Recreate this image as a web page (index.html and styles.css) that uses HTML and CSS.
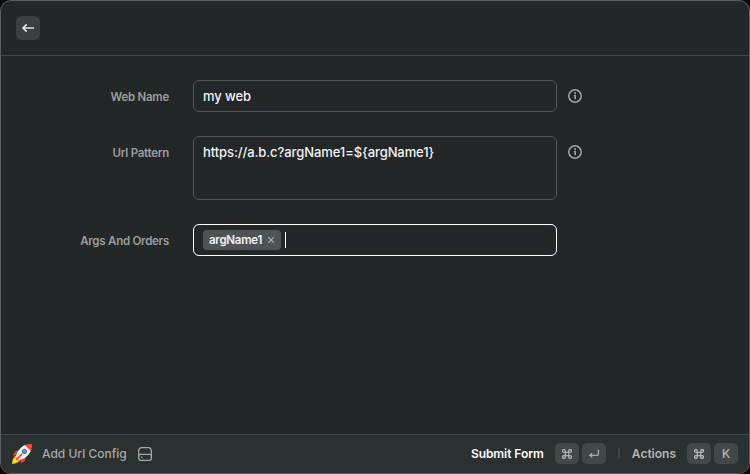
FILE: index.html
```html
<!DOCTYPE html>
<html lang="en">
<head>
<meta charset="utf-8">
<title>Add Url Config</title>
<link rel="stylesheet" href="styles.css">
</head>
<body>
<div class="window">
  <header class="header">
    <button class="back" aria-label="Back">
      <svg width="24" height="24" viewBox="0 0 24 24"><path d="M17.3 12H7M10.2 8.8 6.9 12l3.3 3.2" fill="none" stroke="#e2e4e4" stroke-width="1.7" stroke-linecap="round" stroke-linejoin="round"/></svg>
    </button>
  </header>
  <main class="form">
    <div class="row">
      <label class="label">Web Name</label>
      <div class="field"><span class="value">my web</span></div>
      <svg class="info" width="14" height="14" viewBox="0 0 14 14"><circle cx="7" cy="7" r="6.2" fill="none" stroke="#a4a6a6" stroke-width="1.5"/><path d="M6 6.5H7.2V10.3" fill="none" stroke="#a4a6a6" stroke-width="1.5"/><circle cx="7" cy="4.1" r="1" fill="#a4a6a6"/></svg>
    </div>
    <div class="row">
      <label class="label">Url Pattern</label>
      <div class="field area"><span class="value url">https://a.b.c?argName1=${argName1}</span></div>
      <svg class="info" width="14" height="14" viewBox="0 0 14 14"><circle cx="7" cy="7" r="6.2" fill="none" stroke="#a4a6a6" stroke-width="1.5"/><path d="M6 6.5H7.2V10.3" fill="none" stroke="#a4a6a6" stroke-width="1.5"/><circle cx="7" cy="4.1" r="1" fill="#a4a6a6"/></svg>
    </div>
    <div class="row">
      <label class="label">Args And Orders</label>
      <div class="field focused">
        <span class="tag"><span>argName1</span><svg width="8" height="8" viewBox="0 0 8 8"><path d="M1.2 1.2 6.8 6.8M6.8 1.2 1.2 6.8" stroke="#b4b5b5" stroke-width="1.1"/></svg></span>
        <span class="caret"></span>
      </div>
    </div>
  </main>
  <footer class="footer">
    <svg class="rocket" width="22" height="22" viewBox="0 0 22 22">
      <path d="M1 21C1 16.5 2.5 13.5 5.5 12.5L9.5 16.5C8.5 19 5.5 20.5 1 21Z" fill="#f5b51d"/>
      <path d="M1.6 20.4C2.2 17.6 3.6 15.4 5.8 14.6L7.4 16.2C6.4 18.4 4.4 19.8 1.6 20.4Z" fill="#ffe34d"/>
      <path d="M8.5 7.2 4.2 8.2 1.8 12.6 6 12.2ZM15 13.4 14.2 17.8 9.6 20.6 9.8 16Z" fill="#e8452f"/>
      <path d="M5 13.5C6.3 7.8 10.4 3 15.2 1.8L20.3 6.8C18.8 11.4 14.2 15.8 8.5 17Z" fill="#eaf0f7"/>
      <path d="M14 2.2C16.4 1 18.8.9 21 1 21.2 3.4 20.9 5.8 19.8 8.1Z" fill="#ed4b36"/>
      <circle cx="13.4" cy="8.5" r="2.5" fill="#51616d"/><circle cx="13.4" cy="8.5" r="1.6" fill="#42a9dc"/>
      <path d="M10.5 11.5 5.7 16.4" stroke="#e8452f" stroke-width="1.7" stroke-linecap="round"/>
    </svg>
    <span class="command">Add Url Config</span>
    <svg class="drive" width="14" height="14" viewBox="0 0 14 14"><path d="M.7 9.5V4C.7 1.6 1.6.7 3.8.7h6.4c2.2 0 3.1.9 3.1 3.3v5.5" fill="none" stroke="#a6a9a9" stroke-width="1.3"/><rect x=".7" y="7.3" width="12.6" height="6" rx="2" fill="none" stroke="#a6a9a9" stroke-width="1.3"/><circle cx="3.8" cy="10.4" r=".8" fill="#a6a9a9"/></svg>
    <div class="actions">
      <span class="submit">Submit Form</span>
      <span class="key first"><svg width="10" height="10" viewBox="0 0 10 10"><path d="M3.3 3.3V1.9A1.4 1.4 0 1 0 1.9 3.3H8.1A1.4 1.4 0 1 0 6.7 1.9V8.1A1.4 1.4 0 1 0 8.1 6.7H1.9A1.4 1.4 0 1 0 3.3 8.1Z" fill="none" stroke="#a9adad" stroke-width="1.3"/></svg></span>
      <span class="key"><svg width="12" height="10" viewBox="0 0 12 10"><path d="M10.4.8V4.8C10.4 5.8 9.9 6.3 8.9 6.3H2" fill="none" stroke="#a9adad" stroke-width="1.3"/><path d="M4.2 3.5V9.1L.8 6.3Z" fill="#a9adad"/></svg></span>
      <span class="divider"></span>
      <span class="more">Actions</span>
      <span class="key first"><svg width="10" height="10" viewBox="0 0 10 10"><path d="M3.3 3.3V1.9A1.4 1.4 0 1 0 1.9 3.3H8.1A1.4 1.4 0 1 0 6.7 1.9V8.1A1.4 1.4 0 1 0 8.1 6.7H1.9A1.4 1.4 0 1 0 3.3 8.1Z" fill="none" stroke="#b4b7b7" stroke-width="1.3"/></svg></span>
      <span class="key">K</span>
    </div>
  </footer>
</div>
</body>
</html>
```
FILE: styles.css
```css
* { box-sizing: border-box; }
body {
  margin: 0;
  background: #090909;
  font-family: Inter, "Liberation Sans", sans-serif;
  font-size: 13px;
  font-weight: 500;
  color: #f2f3f3;
}
.window {
  width: 750px;
  height: 474px;
  display: flex;
  flex-direction: column;
  border: 1px solid #5b5f5f;
  border-radius: 11px;
  overflow: hidden;
  background: #232727;
}
.header {
  height: 55px;
  flex: none;
  padding: 15px;
  border-bottom: 1px solid #424646;
}
.back {
  display: block;
  width: 24px;
  height: 24px;
  padding: 0;
  border: 0;
  border-radius: 6px;
  background: #3c3f3f;
}
.back svg { display: block; }
.form {
  flex: 1;
  display: flex;
  flex-direction: column;
  gap: 24px;
  padding-top: 24px;
}
.row { display: flex; align-items: flex-start; }
.label {
  width: 168px;
  height: 32px;
  margin-right: 24px;
  padding-top: 1px;
  line-height: 32px;
  font-size: 11.5px;
  font-weight: 600;
  letter-spacing: -.25px;
  text-align: right;
  color: #9b9d9d;
}
.field {
  width: 364px;
  height: 32px;
  display: flex;
  align-items: center;
  padding: 0 9px;
  border: 1px solid #515555;
  border-radius: 6px;
}
.area { height: 64px; align-items: flex-start; padding-top: 7px; }
.focused { border-color: #fff; }
.value { line-height: 16px; letter-spacing: -.09px; }
.info { margin: 9px 0 0 11px; }
.tag {
  height: 20px;
  width: 78px;
  display: flex;
  align-items: center;
  justify-content: space-between;
  padding: 0 6px;
  border-radius: 4px;
  background: #505353;
  font-size: 11.5px;
  font-weight: 600;
  letter-spacing: -.25px;
}
.caret { width: 1px; height: 16px; margin-left: 4px; background: #fff; }
.footer {
  height: 39px;
  flex: none;
  display: flex;
  align-items: center;
  padding: 0 11px 0 10px;
  border-top: 1px solid #424646;
  background: #2b3030;
  font-size: 12px;
}
.command { margin-left: 9px; padding-bottom: 2px; color: #a6a9a9; }
.drive { margin-left: 11px; }
.actions { margin-left: auto; display: flex; align-items: center; padding-bottom: 1px; }
.submit { font-weight: 600; letter-spacing: -.05px; color: #fff; }
.more { font-weight: 600; color: #b4b7b7; }
.key {
  width: 24px;
  height: 21px;
  margin-left: 3px;
  display: flex;
  align-items: center;
  justify-content: center;
  border-radius: 5px;
  background: #434747;
  color: #b4b7b7;
}
.first { margin-left: 11px; }
.divider { width: 2px; height: 11px; margin: 0 12px; background: #414545; }
```
